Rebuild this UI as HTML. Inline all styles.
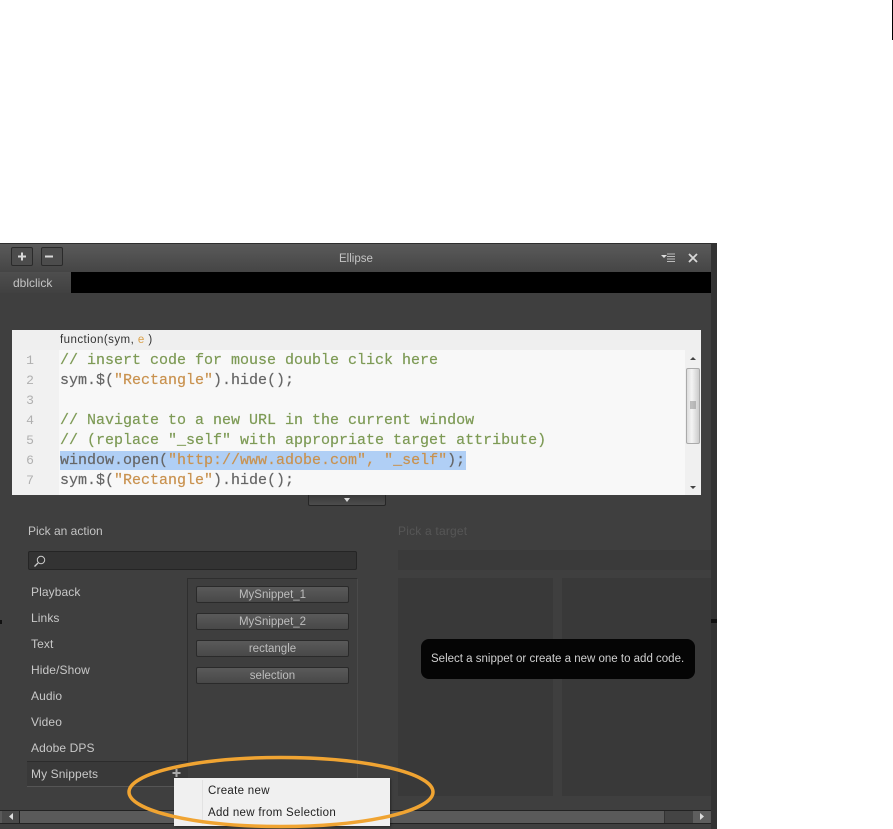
<!DOCTYPE html>
<html><head><meta charset="utf-8"><style>
html,body{margin:0;padding:0;background:#fff}
body{width:893px;height:829px;position:relative;overflow:hidden;font-family:"Liberation Sans",sans-serif}
#w{left:0;top:0;width:893px;height:829px;filter:blur(.35px)}
div{position:absolute;box-sizing:border-box}
.t{white-space:nowrap;color:#ccc;font-size:12px;line-height:14px}
.l{left:31px;color:#c8c8c8;letter-spacing:.1px}
.b{left:196px;width:153px;height:17px;background:linear-gradient(#5a5a5a,#484848);border:1px solid #2a2a2a;border-radius:2px;text-align:center;color:#bdbdbd;font-size:11.5px;line-height:16px}
.c{left:60px;font:15px/20px "Liberation Mono",monospace;color:#666;white-space:pre;-webkit-text-stroke:.2px currentColor}
.n{left:20px;width:20px;text-align:center;font:13px/20px "Liberation Mono",monospace;color:#b0b0b0}
.g{color:#7d9a55}.o{color:#c9924f}
</style></head><body><div id="w">
<div style="left:892px;top:0;width:1px;height:40px;background:#000"></div>
<div style="left:711px;top:243px;width:6px;height:586px;background:#333"></div>
<div style="left:711px;top:619px;width:6px;height:4px;background:#111"></div>
<div style="left:0;top:243px;width:711px;height:586px;background:#3f3f3f"></div>
<div style="left:0;top:620px;width:2px;height:4px;background:#111"></div>
<div style="left:0;top:243px;width:711px;height:29px;background:linear-gradient(#5a5a5a,#454545);border-top:1px solid #2e2e2e"></div>
<div style="left:11px;top:247px;width:22px;height:19px;border:1px solid #2a2a2a;border-radius:2px;background:#4c4c4c"></div>
<div style="left:41px;top:247px;width:22px;height:19px;border:1px solid #2a2a2a;border-radius:2px;background:#4c4c4c"></div>
<svg style="position:absolute;left:11px;top:247px" width="52" height="19"><path d="M7 9.500h8M11 5.500v8M34 9.500h8" stroke="#d8d8d8" stroke-width="2"/></svg>
<div class="t" style="left:339px;top:252px;font-size:11.5px;color:#c4c4c4">Ellipse</div>
<svg style="position:absolute;left:660px;top:252px" width="40" height="12"><path d="M1 3h6l-3 3z" fill="#ddd"/><path d="M7 2h8M7 4.500h8M7 7h8M7 9.500h8" stroke="#bbb"/><path d="M29 2l8 8M37 2l-8 8" stroke="#d8d8d8" stroke-width="1.800"/></svg>
<div style="left:0;top:272px;width:711px;height:21px;background:#000"></div>
<div style="left:0;top:272px;width:71px;height:21px;background:linear-gradient(#4e4e4e,#414141)"></div>
<div class="t" style="left:13px;top:276px;color:#c4c4c4">dblclick</div>

<div style="left:12px;top:330px;width:689px;height:165px;background:#f8f8f8"></div>
<div style="left:12px;top:330px;width:689px;height:20px;background:#efefef"></div>
<div style="left:12px;top:350px;width:47px;height:145px;background:#f1f1f1"></div>
<div style="left:685px;top:350px;width:16px;height:145px;background:#f0f0f0"></div>
<div class="t" style="left:60px;top:333px;color:#333;font-size:11.5px;letter-spacing:.45px">function(sym, <span style="color:#d9a04a">e</span> )</div>
<div class="n" style="top:351px">1</div><div class="n" style="top:371px">2</div><div class="n" style="top:391px">3</div><div class="n" style="top:411px">4</div><div class="n" style="top:431px">5</div><div class="n" style="top:451px">6</div><div class="n" style="top:471px">7</div>
<div style="left:60px;top:451px;width:406px;height:19px;background:#b0cff5"></div>
<div class="c g" style="top:351px">// insert code for mouse double click here</div>
<div class="c" style="top:371px">sym.$(<span class="o">"Rectangle"</span>).hide();</div>
<div class="c g" style="top:411px">// Navigate to a new URL in the current window</div>
<div class="c g" style="top:431px">// (replace "_self" with appropriate target attribute)</div>
<div class="c" style="top:451px">window.open(<span class="o">"http://www.adobe.com", "_self"</span>);</div>
<div class="c" style="top:471px">sym.$(<span class="o">"Rectangle"</span>).hide();</div>
<div style="left:686px;top:368px;width:14px;height:76px;background:linear-gradient(90deg,#ddd,#f4f4f4 40%,#ccc);border:1px solid #aaa;border-radius:2px"></div>
<svg style="position:absolute;left:686px;top:352px" width="14" height="142"><path d="M4 8l3-3 3 3z" fill="#444"/><path d="M4 134l3 3 3-3z" fill="#444"/><path d="M4 50h6M4 52h6M4 54h6M4 56h6" stroke="#888"/></svg>

<div style="left:308px;top:495px;width:78px;height:11px;background:linear-gradient(#3a3a3a,#4d4d4d);border:1px solid #262626;border-top:0;border-radius:0 0 2px 2px"></div>
<svg style="position:absolute;left:342px;top:496px" width="10" height="8"><path d="M2 2h6l-3 4z" fill="#ddd"/></svg>

<div class="t" style="left:28px;top:524px;color:#c4c4c4">Pick an action</div>
<div class="t" style="left:398px;top:524px;color:#565656;letter-spacing:.2px">Pick a target</div>
<div style="left:28px;top:551px;width:329px;height:19px;background:#333;border:1px solid #252525;border-radius:2px"></div>
<svg style="position:absolute;left:32px;top:554px" width="16" height="14"><circle cx="9" cy="6" r="3.700" fill="none" stroke="#ccc"/><path d="M6 9l-3.500 3.500" stroke="#ccc" stroke-width="1.300"/></svg>
<div style="left:398px;top:550px;width:313px;height:20px;background:#3a3a3a"></div>
<div style="left:398px;top:578px;width:155px;height:218px;background:#393939"></div>
<div style="left:562px;top:578px;width:149px;height:218px;background:#393939"></div>

<div style="left:187px;top:578px;width:171px;height:232px;border:1px solid #2e2e2e;border-right-color:#4a4a4a;border-bottom:0;background:#3e3e3e"></div>
<div class="b" style="top:586px">MySnippet_1</div>
<div class="b" style="top:613px">MySnippet_2</div>
<div class="b" style="top:640px">rectangle</div>
<div class="b" style="top:667px">selection</div>
<div class="t l" style="top:585px">Playback</div>
<div class="t l" style="top:611px">Links</div>
<div class="t l" style="top:637px">Text</div>
<div class="t l" style="top:663px">Hide/Show</div>
<div class="t l" style="top:689px">Audio</div>
<div class="t l" style="top:715px">Video</div>
<div class="t l" style="top:741px">Adobe DPS</div>
<div style="left:27px;top:761px;width:161px;height:26px;background:#393939;border-top:1px solid #2c2c2c;border-bottom:1px solid #555"></div>
<div class="t l" style="top:767px">My Snippets</div>
<svg style="position:absolute;left:171px;top:768px" width="11" height="11"><path d="M1.500 5h8M5.500 1v8" stroke="#aaa" stroke-width="2"/></svg>

<div style="left:421px;top:639px;width:274px;height:40px;background:#050505;border-radius:8px"></div>
<div class="t" style="left:431px;top:652px;font-size:11.5px;color:#d0d0d0">Select a snippet or create a new one to add code.</div>

<div style="left:0;top:810px;width:711px;height:14px;background:#5a5a5a;border-top:1px solid #222;border-bottom:1px solid #222"></div>
<div style="left:2px;top:811px;width:18px;height:12px;background:#4a4a4a;border-right:1px solid #222"></div>
<div style="left:664px;top:811px;width:29px;height:12px;background:#444;border-left:1px solid #333"></div>
<div style="left:693px;top:811px;width:17px;height:12px;background:#5e5e5e"></div>
<svg style="position:absolute;left:7px;top:812px" width="8" height="9"><path d="M6 1v7L2 4.500z" fill="#ddd"/></svg>
<svg style="position:absolute;left:698px;top:812px" width="8" height="9"><path d="M2 1v7l4-3.500z" fill="#ddd"/></svg>

<div style="left:174px;top:778px;width:216px;height:48px;background:#f0f0f0;box-shadow:1px 1px 2px rgba(0,0,0,.4)"></div>
<div style="left:202px;top:780px;width:1px;height:44px;background:#e2e2e2"></div>
<div class="t" style="left:208px;top:784px;color:#222;font-size:11.5px;letter-spacing:.3px">Create new</div>
<div class="t" style="left:208px;top:806px;color:#222;font-size:11.5px;letter-spacing:.3px">Add new from Selection</div>
<svg style="position:absolute;left:120px;top:750px" width="330" height="79"><ellipse cx="161" cy="42" rx="152" ry="34.500" fill="none" stroke="#f0a432" stroke-width="3.500"/></svg>
</div></body></html>
